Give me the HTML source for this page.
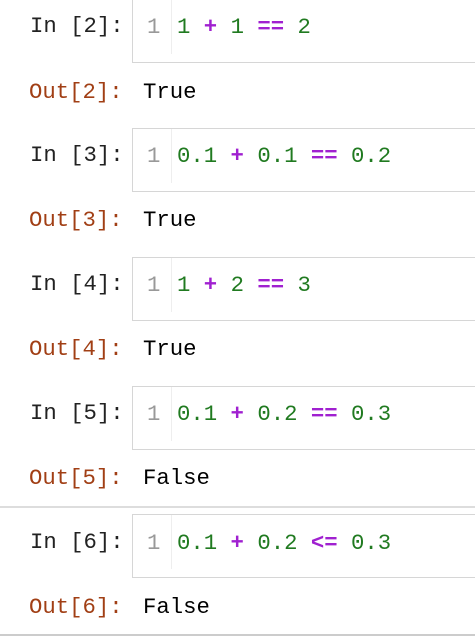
<!DOCTYPE html>
<html><head><style>
body{margin:0;width:475px;height:637px;background:#fff;position:relative;overflow:hidden;font-family:"Liberation Mono",monospace;font-size:22.3px}
.box{position:absolute;left:132px;width:360px;height:62px;border:1px solid #d6d6d6;border-right:none;background:#fff}
.box .g{position:absolute;left:38px;top:0;bottom:8px;border-left:1px solid #eee}
.t{position:absolute;white-space:pre;line-height:26px}
.in{color:#222}
.out{color:#a13f15}
.ln{color:#999}
.n{color:#207a20}
.o{color:#a020d0;font-weight:bold}
.hr{position:absolute;left:0;width:475px;height:2px;background:#ddd}
</style></head><body>
<div class="box" style="top:-1px"><div class="g"></div></div>
<div class="t in" style="left:30px;top:13px">In [2]:</div>
<div class="t ln" style="left:147px;top:14px">1</div>
<div class="t" style="left:177px;top:14px"><span class="n">1</span> <span class="o">+</span> <span class="n">1</span> <span class="o">==</span> <span class="n">2</span></div>
<div class="t out" style="left:29px;top:79px">Out[2]:</div>
<div class="t" style="left:143px;top:79px">True</div>

<div class="box" style="top:128px"><div class="g"></div></div>
<div class="t in" style="left:30px;top:142px">In [3]:</div>
<div class="t ln" style="left:147px;top:143px">1</div>
<div class="t" style="left:177px;top:143px"><span class="n">0.1</span> <span class="o">+</span> <span class="n">0.1</span> <span class="o">==</span> <span class="n">0.2</span></div>
<div class="t out" style="left:29px;top:207px">Out[3]:</div>
<div class="t" style="left:143px;top:207px">True</div>

<div class="box" style="top:257px"><div class="g"></div></div>
<div class="t in" style="left:30px;top:271px">In [4]:</div>
<div class="t ln" style="left:147px;top:272px">1</div>
<div class="t" style="left:177px;top:272px"><span class="n">1</span> <span class="o">+</span> <span class="n">2</span> <span class="o">==</span> <span class="n">3</span></div>
<div class="t out" style="left:29px;top:336px">Out[4]:</div>
<div class="t" style="left:143px;top:336px">True</div>

<div class="box" style="top:386px"><div class="g"></div></div>
<div class="t in" style="left:30px;top:400px">In [5]:</div>
<div class="t ln" style="left:147px;top:401px">1</div>
<div class="t" style="left:177px;top:401px"><span class="n">0.1</span> <span class="o">+</span> <span class="n">0.2</span> <span class="o">==</span> <span class="n">0.3</span></div>
<div class="t out" style="left:29px;top:465px">Out[5]:</div>
<div class="t" style="left:143px;top:465px">False</div>

<div class="hr" style="top:506px"></div>
<div class="box" style="top:514px"><div class="g"></div></div>
<div class="t in" style="left:30px;top:529px">In [6]:</div>
<div class="t ln" style="left:147px;top:530px">1</div>
<div class="t" style="left:177px;top:530px"><span class="n">0.1</span> <span class="o">+</span> <span class="n">0.2</span> <span class="o">&lt;=</span> <span class="n">0.3</span></div>
<div class="t out" style="left:29px;top:594px">Out[6]:</div>
<div class="t" style="left:143px;top:594px">False</div>
<div class="hr" style="top:634px;background:#ccc"></div>
</body></html>
